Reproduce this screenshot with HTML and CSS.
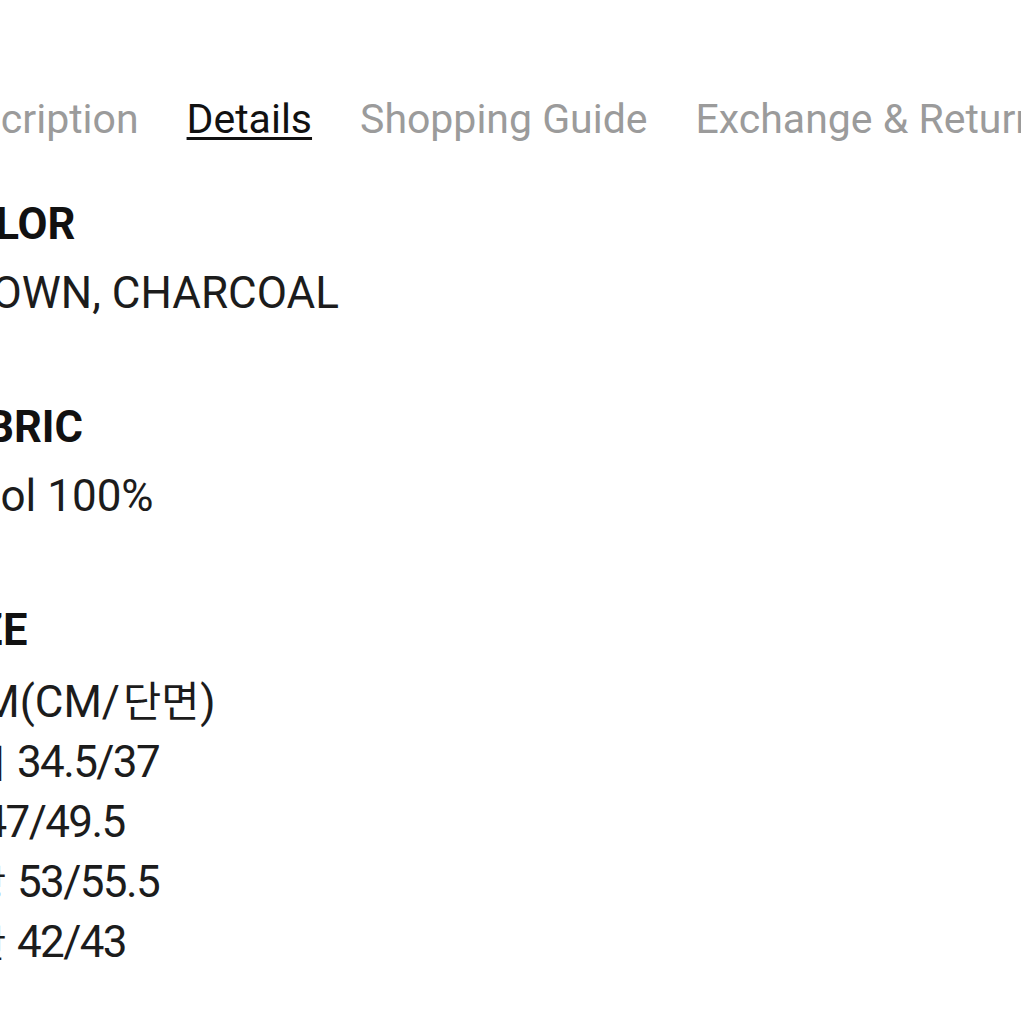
FILE: index.html
```html
<!DOCTYPE html>
<html lang="ko">
<head>
<meta charset="utf-8">
<link rel="stylesheet" href="styles.css">
</head>
<body>
<div class="page">
  <nav class="tabs">
    <span class="tab">Description</span>
    <span class="tab active">Details</span>
    <span class="tab">Shopping Guide</span>
    <span class="tab">Exchange &amp; Returns</span>
  </nav>
  <section class="sec sec-color">
    <h3 class="head">COLOR</h3>
    <p class="val">BROWN, CHARCOAL</p>
  </section>
  <section class="sec sec-fabric">
    <h3 class="head">FABRIC</h3>
    <p class="val">Wool 100%</p>
  </section>
  <section class="sec sec-size">
    <h3 class="head">SIZE</h3>
    <ul class="lines">
      <li>S/M(CM/<span class="ko ko-unit">단면</span>)</li>
      <li><span class="ko">허리</span> <span class="num">34.5/37</span></li>
      <li><span class="ko">힙</span> <span class="num">47/49.5</span></li>
      <li><span class="ko">총장</span> <span class="num">53/55.5</span></li>
      <li><span class="ko">밑단</span> <span class="num">42/43</span></li>
    </ul>
  </section>
</div>
</body>
</html>
```
FILE: styles.css
```css
html, body {
  margin: 0;
  padding: 0;
  background: #ffffff;
  overflow: hidden;
}
body {
  font-family: Roboto, "Noto Sans CJK KR", sans-serif;
  color: #1c1c1c;
}
.page {
  margin-left: -63px;
  padding-top: 89px;
  width: 1200px;
}
.tabs {
  display: flex;
  gap: 48px;
  margin-left: -6px;
  font-size: 41px;
  line-height: 60px;
  white-space: nowrap;
}
.tab {
  color: #9b9b9b;
}
.tab.active {
  color: #111;
  text-decoration: underline;
  text-decoration-thickness: 3px;
  text-underline-offset: 4px;
}
.sec {
  margin: 0;
}
.head {
  margin: 0;
  font-size: 43.5px;
  font-weight: 700;
  color: #111;
  line-height: 60px;
}
.val {
  margin: 8px 0 0;
  font-size: 44px;
  line-height: 60px;
}
.sec-color { margin-top: 46px; }
.sec-fabric { margin-top: 75px; }
.sec-size { margin-top: 75px; }
.lines {
  list-style: none;
  margin: 11px 0 0;
  padding: 0;
  font-size: 44px;
  line-height: 60px;
}
.ko {
  font-size: 37.5px;
  line-height: 1;
}
.ko-unit {
  font-size: 41.5px;
  margin: 0 1px 0 3px;
}
.num {
  letter-spacing: -1.6px;
}
```
